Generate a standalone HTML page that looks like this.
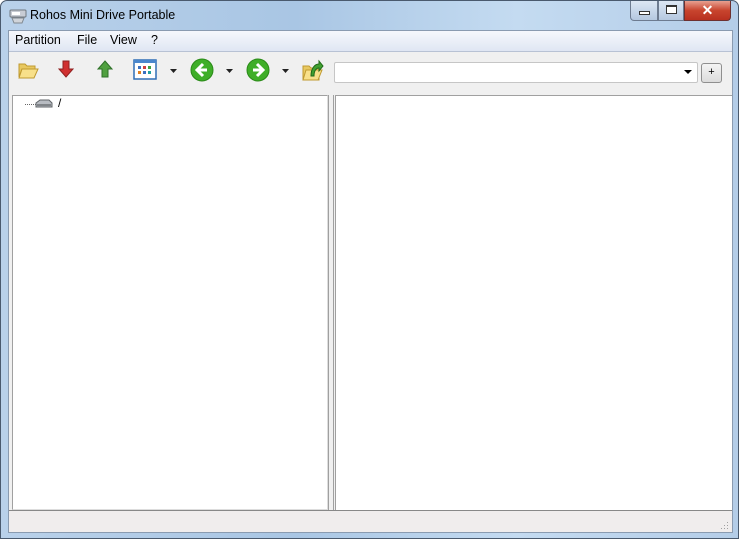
<!DOCTYPE html>
<html><head><style>
*{margin:0;padding:0;box-sizing:border-box}
body{width:739px;height:539px;overflow:hidden;font-family:"Liberation Sans",sans-serif;font-size:12px;background:#fff}
.win{position:absolute;left:0;top:0;width:739px;height:539px;border:1px solid #4a5a6e;border-radius:7px 7px 0 0;background:linear-gradient(90deg,#b9d1ea 0%,#a9c6e4 40%,#c4dbf1 70%,#b4cde8 100%)}
.title{position:absolute;left:29px;top:7px;font-size:12.5px;color:#000}
.client{position:absolute;left:7px;top:29px;width:725px;height:503px;background:#f0f0f0;border:1px solid #8a9bb0}
.menu{position:absolute;left:0;top:0;width:723px;height:21px;background:linear-gradient(#f6f8fc,#dfe6f3);border-bottom:1px solid #b8c2d4}
.menu span{position:absolute;top:2px;font-size:12.5px}
.btn{position:absolute}
.combo{position:absolute;left:325px;top:31px;width:364px;height:21px;background:#fff;border:1px solid #c6c6c6;border-radius:2px}
.plus{position:absolute;left:692px;top:32px;width:21px;height:20px;border:1px solid #8f8f8f;border-radius:3px;background:linear-gradient(#f4f4f4,#dcdcdc);font-size:11px;text-align:center;line-height:17px}
.pl{position:absolute;left:3px;top:64px;width:316px;height:415px;background:#fff;border:1px solid #a0a0a0;border-right-color:#ddd;border-bottom-color:#ddd}
.pr{position:absolute;left:326px;top:64px;width:397px;height:415px;background:#fff;border:1px solid #a0a0a0;border-right:none;border-bottom:none}
.status{position:absolute;left:0;top:479px;width:723px;height:22px;background:#f0eded;border-top:1px solid #888}
</style></head><body>
<div class="win">
<svg style="position:absolute;left:8px;top:7px" width="18" height="16"><rect x="1" y="2" width="16" height="7" rx="1" fill="#c8ccd4" stroke="#707880"/><rect x="3" y="4" width="8" height="3" fill="#fff"/><path d="M3 10h12l-2 5H5z" fill="#d0d4da" stroke="#808890"/></svg>
<div class="title">Rohos Mini Drive Portable</div>
<div style="position:absolute;left:629px;top:0;width:28px;height:20px;border:1px solid #6d7b90;border-top:none;border-radius:0 0 0 4px;background:linear-gradient(#dce7f4,#b5c8e0)"><div style="position:absolute;left:8px;top:10px;width:11px;height:4px;border:1px solid #333;background:#fff"></div></div>
<div style="position:absolute;left:657px;top:0;width:26px;height:20px;border:1px solid #6d7b90;border-top:none;background:linear-gradient(#dce7f4,#b5c8e0)"><div style="position:absolute;left:7px;top:4px;width:11px;height:9px;border:1px solid #333;border-top-width:2px;background:#fff"></div></div>
<div style="position:absolute;left:683px;top:0;width:47px;height:20px;border:1px solid #6d3030;border-top:none;border-radius:0 0 4px 0;background:linear-gradient(#e8a090,#c8442e 50%,#b83020);color:#fff;font-weight:bold;text-align:center;font-size:14px;line-height:18px">✕</div>
<div class="client">
<div class="menu"><span style="left:6px">Partition</span><span style="left:68px">File</span><span style="left:101px">View</span><span style="left:142px">?</span></div>
<svg class="btn" style="left:9px;top:29px" width="22" height="20"><path d="M1 4h6l2 2h8v3H4L1 17z" fill="#e8c860" stroke="#c09a30"/><path d="M4 9h16l-4 9H1z" fill="#f8e08a" stroke="#c09a30"/></svg>
<svg class="btn" style="left:49px;top:29px" width="16" height="18"><path d="M5 1h6v8h4l-7 8-7-8h4z" fill="#d03030" stroke="#902020"/></svg>
<svg class="btn" style="left:88px;top:29px" width="16" height="18"><path d="M8 1l7 8h-4v8H5V9H1z" fill="#50a040" stroke="#2e7028"/></svg>
<svg class="btn" style="left:124px;top:28px" width="24" height="21"><rect x="1" y="1" width="22" height="19" fill="#fff" stroke="#2f6db5" stroke-width="1.5"/><rect x="1" y="1" width="22" height="3" fill="#4a86cc"/><rect x="5" y="7" width="3" height="3" fill="#3a6fc0"/><rect x="10" y="7" width="3" height="3" fill="#d04040"/><rect x="15" y="7" width="3" height="3" fill="#40a040"/><rect x="5" y="12" width="3" height="3" fill="#e08020"/><rect x="10" y="12" width="3" height="3" fill="#3a6fc0"/><rect x="15" y="12" width="3" height="3" fill="#20a0a0"/></svg>
<svg class="btn" style="left:161px;top:38px" width="8" height="5"><path d="M0 0h7L3.5 4z" fill="#222"/></svg>
<svg class="btn" style="left:181px;top:27px" width="24" height="24"><circle cx="12" cy="12" r="11" fill="#3fae28" stroke="#2a8a18"/><path d="M13 6l-6 6 6 6M7 12h10" stroke="#fff" stroke-width="3" fill="none"/></svg>
<svg class="btn" style="left:217px;top:38px" width="8" height="5"><path d="M0 0h7L3.5 4z" fill="#222"/></svg>
<svg class="btn" style="left:237px;top:27px" width="24" height="24"><circle cx="12" cy="12" r="11" fill="#3fae28" stroke="#2a8a18"/><path d="M11 6l6 6-6 6M17 12H7" stroke="#fff" stroke-width="3" fill="none"/></svg>
<svg class="btn" style="left:273px;top:38px" width="8" height="5"><path d="M0 0h7L3.5 4z" fill="#222"/></svg>
<svg class="btn" style="left:293px;top:25px" width="22" height="26"><path d="M1 10h6l2 2h8v12H1z" fill="#e8c860" stroke="#c09a30"/><path d="M4 14h16l-4 10H1z" fill="#f8e08a" stroke="#c09a30"/><path d="M9 20c0-8 4-12 8-12V5l4 5-4 5v-3c-3 0-5 3-5 8z" fill="#40a030" stroke="#206818"/></svg>
<div class="combo"><svg style="position:absolute;right:4px;top:7px" width="9" height="5"><path d="M0 0h8L4 4z" fill="#000"/></svg></div>
<div class="plus">+</div>
<div class="pl">
<div style="position:absolute;left:12px;top:8px;width:13px;border-top:1px dotted #666"></div>
<svg style="position:absolute;left:22px;top:3px" width="18" height="10"><path d="M1 4l4-3h9l3 3v4H1z" fill="#b8bcc2" stroke="#606468"/><rect x="2" y="5" width="14" height="2" fill="#808488"/></svg>
<div style="position:absolute;left:45px;top:0;font-size:12px">/</div>
</div>
<div style="position:absolute;left:319px;top:64px;width:6px;height:415px;background:#f0f0f0;border-left:1px solid #a0a0a0;border-right:1px solid #a0a0a0"></div>
<div class="pr"></div>
<div class="status"><svg style="position:absolute;right:2px;top:10px" width="10" height="10"><g fill="#a0a0a0"><rect x="7" y="1" width="1" height="1"/><rect x="4" y="4" width="1" height="1"/><rect x="7" y="4" width="1" height="1"/><rect x="1" y="7" width="1" height="1"/><rect x="4" y="7" width="1" height="1"/><rect x="7" y="7" width="1" height="1"/></g></svg></div>
</div>
</div>
</body></html>
